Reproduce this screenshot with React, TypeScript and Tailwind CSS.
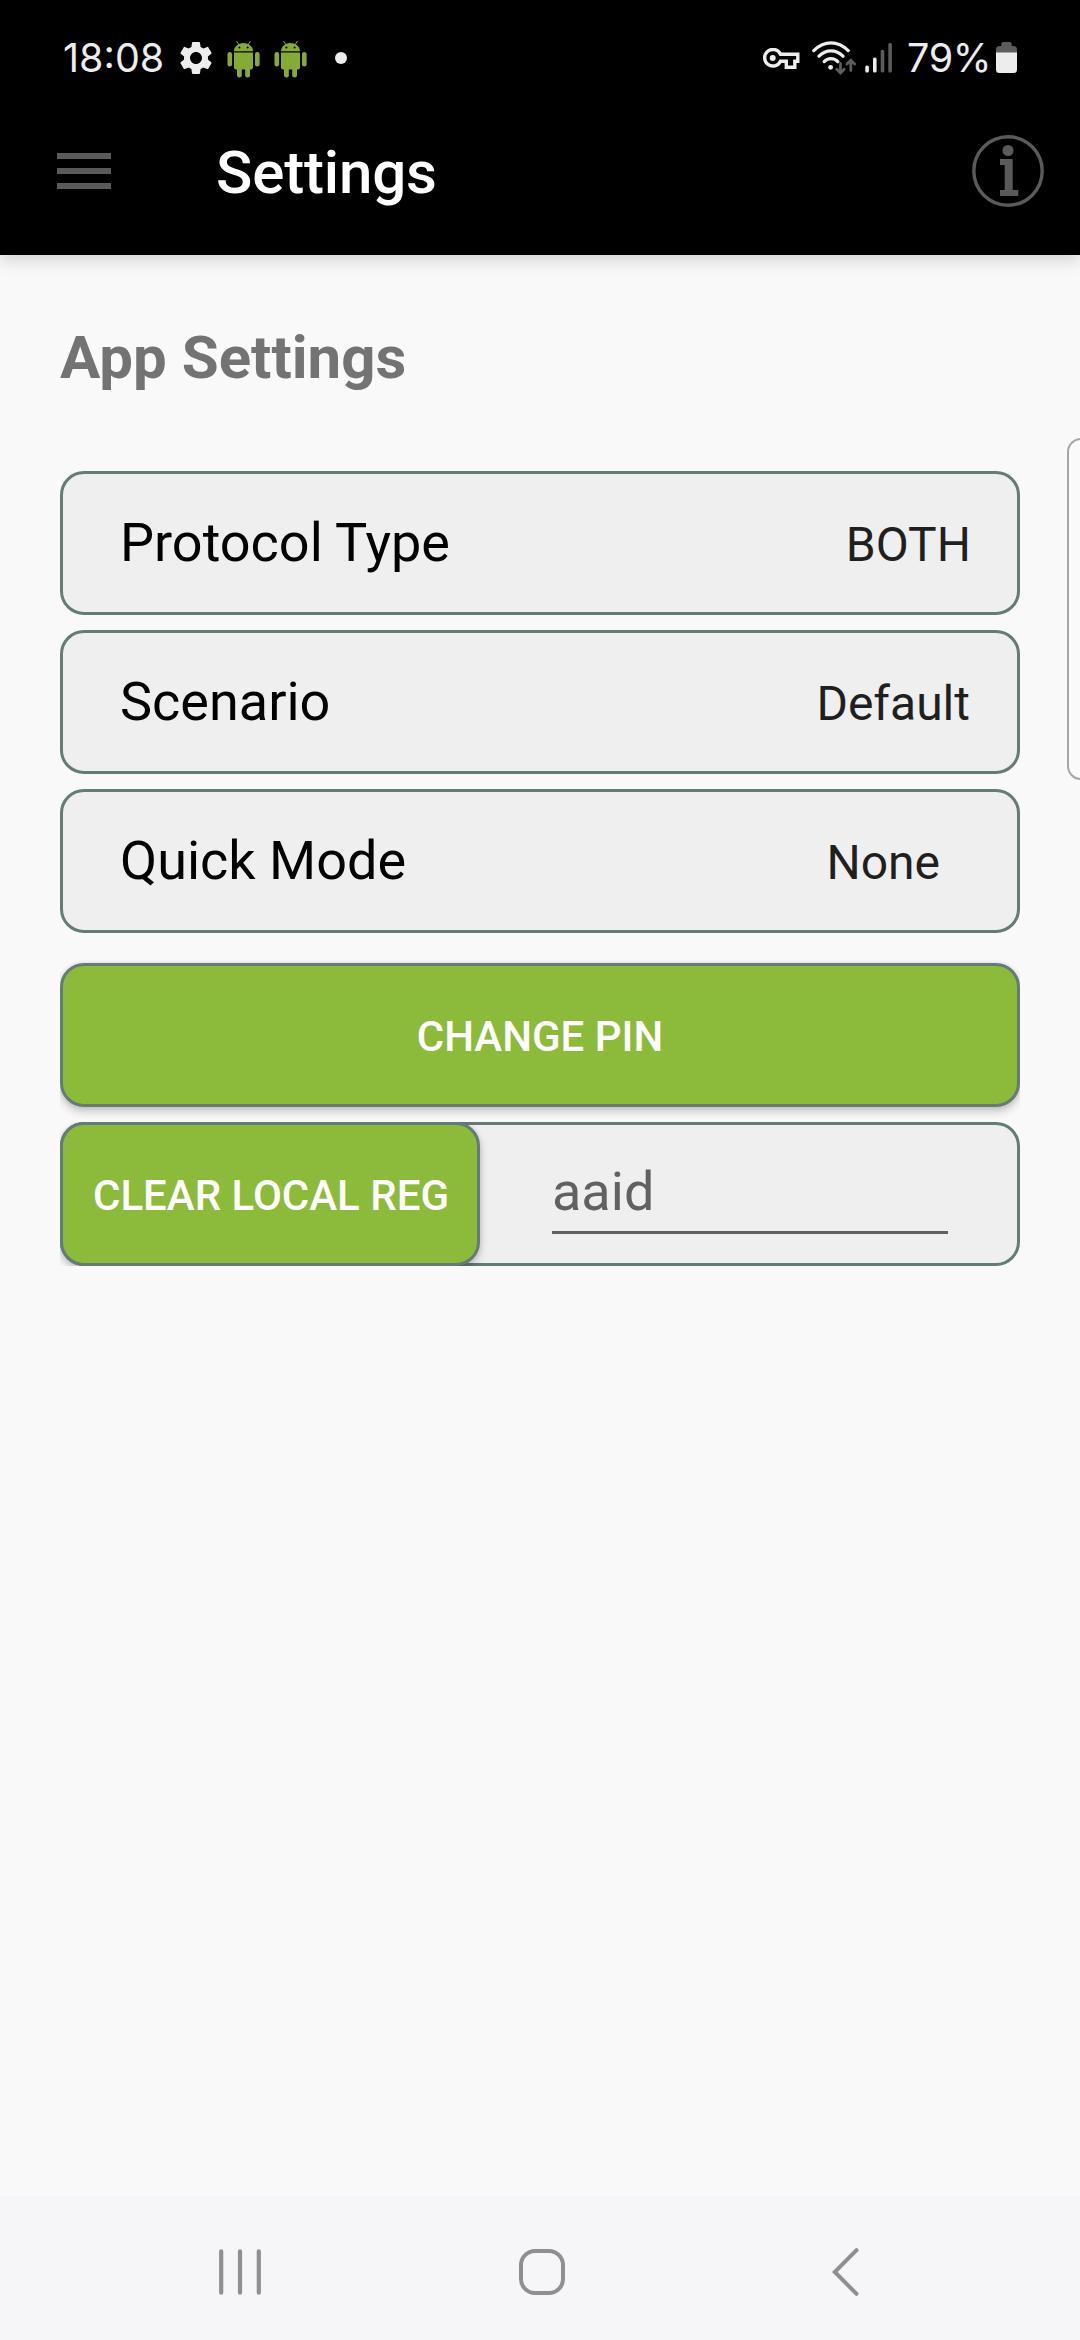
import React from "react";

function AndroidRobot() {
  return (
    <svg width="33" height="38" viewBox="0 0 33 38" fill="#87a936">
      <path d="M9.5 1 12 5M23.5 1 21 5" stroke="#87a936" strokeWidth="1" fill="none" />
      <path d="M7 11.2C7 6.8 11 3 16.5 3S26 6.8 26 11.2Z" />
      <rect x="0.5" y="12" width="4.6" height="14.5" rx="2.3" />
      <rect x="28" y="12" width="4.6" height="14.5" rx="2.3" />
      <path d="M7 12.4h19v15.2a2 2 0 0 1-2 2H9a2 2 0 0 1-2-2Z" />
      <rect x="10" y="22" width="4.8" height="15.4" rx="2.2" />
      <rect x="18.2" y="22" width="4.8" height="15.4" rx="2.2" />
      <circle cx="12.4" cy="7.6" r="1" fill="#000" />
      <circle cx="20.6" cy="7.6" r="1" fill="#000" />
    </svg>
  );
}

function Gear() {
  return (
    <svg width="40" height="40" viewBox="0 0 24 24" fill="#ededed">
      <path d="M19.14 12.94c.04-.3.06-.61.06-.94 0-.32-.02-.64-.07-.94l2.03-1.58c.18-.14.23-.41.12-.61l-1.92-3.32c-.12-.22-.37-.29-.59-.22l-2.39.96c-.5-.38-1.03-.7-1.62-.94l-.36-2.54c-.04-.24-.24-.41-.48-.41h-3.84c-.24 0-.43.17-.47.41l-.36 2.54c-.59.24-1.13.57-1.62.94l-2.39-.96c-.22-.08-.47 0-.59.22L2.74 8.87c-.12.21-.08.47.12.61l2.03 1.58c-.05.3-.09.63-.09.94s.02.64.07.94l-2.03 1.58c-.18.14-.23.41-.12.61l1.92 3.32c.12.22.37.29.59.22l2.39-.96c.5.38 1.03.7 1.62.94l.36 2.54c.05.24.24.41.48.41h3.84c.24 0 .44-.17.47-.41l.36-2.54c.59-.24 1.13-.56 1.62-.94l2.39.96c.22.08.47 0 .59-.22l1.92-3.32c.12-.22.07-.47-.12-.61l-2.01-1.58zM12 15.6c-1.98 0-3.6-1.62-3.6-3.6s1.62-3.6 3.6-3.6 3.6 1.62 3.6 3.6-1.62 3.6-3.6 3.6z" />
    </svg>
  );
}

function VpnKey() {
  return (
    <svg width="38" height="22" viewBox="0 0 38 22" fill="none">
      <path
        d="M18.5 6.3H35.8V13.2H32.8V19.2H24.3V13.2H18.5A8.3 8.3 0 1 1 18.5 6.3Z"
        stroke="#ededed"
        strokeWidth="3.4"
      />
      <circle cx="10.7" cy="10" r="3" fill="#ededed" />
    </svg>
  );
}

function Wifi() {
  return (
    <svg width="44" height="34" viewBox="0 0 44 34" fill="none" strokeLinecap="round">
      <g stroke="#ededed" strokeWidth="3.3">
        <path d="M1.8 9.6C12.5-.6 25.5-.6 36.2 9.6" />
        <path d="M7 15.2C14 8.2 24 8.2 31 15.2" />
        <path d="M12.2 20.6C16 16.6 22 16.6 25.8 20.6" />
      </g>
      <circle cx="18.6" cy="26.3" r="2.4" fill="#ededed" />
      <g stroke="#5c5c5c" strokeWidth="2.8">
        <path d="M28.5 22.5V32M24.8 28.3 28.5 32 32.2 28.3" />
        <path d="M38.8 29.5V19.5M35 23 38.8 19.3 42.6 23" />
      </g>
    </svg>
  );
}

function Signal() {
  return (
    <svg width="28" height="30" viewBox="0 0 28 30">
      <rect x="0.3" y="22.5" width="3.6" height="7" rx="1.6" fill="#ededed" />
      <rect x="8" y="14.5" width="3.6" height="15" rx="1.6" fill="#ededed" />
      <rect x="15.7" y="6.8" width="3.6" height="22.7" rx="1.6" fill="#5c5c5c" />
      <rect x="23.3" y="0" width="3.6" height="29.5" rx="1.6" fill="#5c5c5c" />
    </svg>
  );
}

function Battery() {
  return (
    <svg width="21" height="31" viewBox="0 0 21 31">
      <path d="M0 11V7.5A3.5 3.5 0 0 1 3.5 4H5.300V2A2 2 0 0 1 7.300 0H13.700A2 2 0 0 1 15.700 2V4H17.5A3.5 3.5 0 0 1 21 7.5V11Z" fill="#5c5c5c" />
      <path d="M0 10.5H21V27.5A3.5 3.5 0 0 1 17.5 31H3.5A3.5 3.5 0 0 1 0 27.5Z" fill="#ededed" />
    </svg>
  );
}

function StatusBar() {
  return (
    <div className="flex h-[116px] items-start justify-between px-[63px] font-['Inter',sans-serif] text-[39.5px] font-[370] leading-[48px] text-[#ededed]">
      <div className="flex items-start">
        <span className="mt-[34px] w-[114px] whitespace-nowrap">18:08</span>
        <div className="mt-[38px] -ml-px w-[51px]"><Gear /></div>
        <div className="mt-[40px] w-[47px]"><AndroidRobot /></div>
        <div className="mt-[40px] w-[61px]"><AndroidRobot /></div>
        <div className="mt-[52px] size-3 rounded-full bg-[#ededed]" />
      </div>
      <div className="flex items-start">
        <div className="mt-[48px] w-[50px]"><VpnKey /></div>
        <div className="mt-[41px] w-[53px]"><Wifi /></div>
        <div className="mt-[43px] w-[42px]"><Signal /></div>
        <span className="mt-[34px] w-[89px] whitespace-nowrap tracking-[-0.3px]">79%</span>
        <div className="mt-[42px] w-[21px]"><Battery /></div>
      </div>
    </div>
  );
}

function Toolbar() {
  return (
    <div className="flex h-[139px] items-start pl-[57px] pr-9">
      <div className="mt-[37px] flex w-[54px] flex-col gap-[9px]">
        <div className="h-[6px] bg-[#5a5a5a]" />
        <div className="h-[6px] bg-[#5a5a5a]" />
        <div className="h-[6px] bg-[#5a5a5a]" />
      </div>
      <h1 className="ml-[105px] mt-[22px] grow text-[60px] font-medium leading-[70px] tracking-[-0.15px] text-white">Settings</h1>
      <svg className="mt-[19px]" width="72" height="72" viewBox="0 0 72 72">
        <circle cx="36" cy="36" r="34.2" fill="none" stroke="#5a5a5a" strokeWidth="3.4" />
        <circle cx="36" cy="15.5" r="5.5" fill="#5a5a5a" />
        <path d="M28 24H40.7V55H46.3V61H28V55H32.7V30H28Z" fill="#5a5a5a" />
      </svg>
    </div>
  );
}

function SettingRow({ label, value, valueClass }: { label: string; value: string; valueClass: string }) {
  return (
    <div className="flex h-36 items-center justify-between rounded-[24px] border-[3px] border-[#657b78] bg-[#efefef] pl-[57px]">
      <span className="text-[54px] leading-[64px] text-black">{label}</span>
      <span className={`pt-[3px] text-[48px] leading-[56px] text-[#1f1f1f] ${valueClass}`}>{value}</span>
    </div>
  );
}

const BUTTON =
  "flex h-36 items-center justify-center rounded-[24px] border-[3px] border-[#657b78] bg-[#8cbb3b] pt-[3px] text-[42px] font-medium leading-[50px] text-white shadow-[0_5px_8px_rgba(0,0,0,0.2),0_0_5px_rgba(0,0,0,0.1)]";

export default function App() {
  return (
    <div className="relative flex h-[2340px] w-[1080px] flex-col overflow-hidden bg-[#f9f9f9] font-['Roboto',sans-serif]">
      <header className="h-[255px] bg-black shadow-[0_5px_16px_rgba(0,0,0,0.16)]">
        <StatusBar />
        <Toolbar />
      </header>

      <main className="grow px-[60px] pt-[68px]">
        <h2 className="h-[148px] text-[60px] font-bold leading-[70px] text-[#737373]">App Settings</h2>
        <div className="flex flex-col gap-[15px]">
          <SettingRow label="Protocol Type" value="BOTH" valueClass="pr-[46px]" />
          <SettingRow label="Scenario" value="Default" valueClass="pr-[47px]" />
          <SettingRow label="Quick Mode" value="None" valueClass="pr-[77px]" />
        </div>
        <div className="mt-[30px] overflow-x-clip">
          <button className={`${BUTTON} w-full`}>CHANGE PIN</button>
        </div>
        <div className="mt-[15px] overflow-hidden">
          <div className="flex h-36 rounded-[24px] bg-[#efefef] ring-[3px] ring-inset ring-[#657b78]">
            <button className={`${BUTTON} w-[420px] pl-[2px]`}>CLEAR LOCAL REG</button>
            <div className="ml-[72px] mt-[36px] h-[76px] w-[396px] border-b-[3px] border-[#616161] text-[54px] leading-[68px] text-[#616161]">
              aaid
            </div>
          </div>
        </div>
      </main>

      <nav className="flex h-[144px] items-start bg-[#f6f6f8] pt-[52px]">
        <svg className="ml-[218px]" width="44" height="48" viewBox="0 0 44 48" stroke="#8f8f8f" strokeWidth="4.2" strokeLinecap="round">
          <path d="M3.2 3.3V44.7M22 3.3V44.7M40.8 3.3V44.7" />
        </svg>
        <svg className="ml-[256px]" width="48" height="48" viewBox="0 0 48 48" fill="none" stroke="#8f8f8f" strokeWidth="4">
          <rect x="3" y="3" width="42" height="42" rx="14" />
        </svg>
        <svg className="ml-[262px]" width="36" height="48" viewBox="0 0 36 48" fill="none" stroke="#8f8f8f" strokeWidth="4" strokeLinecap="round">
          <path d="M28.5 2.2 6.8 24 28.5 45.8" />
        </svg>
      </nav>

      <div className="absolute -right-5 top-[438px] h-[342px] w-[33px] rounded-[14px] border-2 border-[#a6a6a6] bg-[#fafafa]" />
    </div>
  );
}
